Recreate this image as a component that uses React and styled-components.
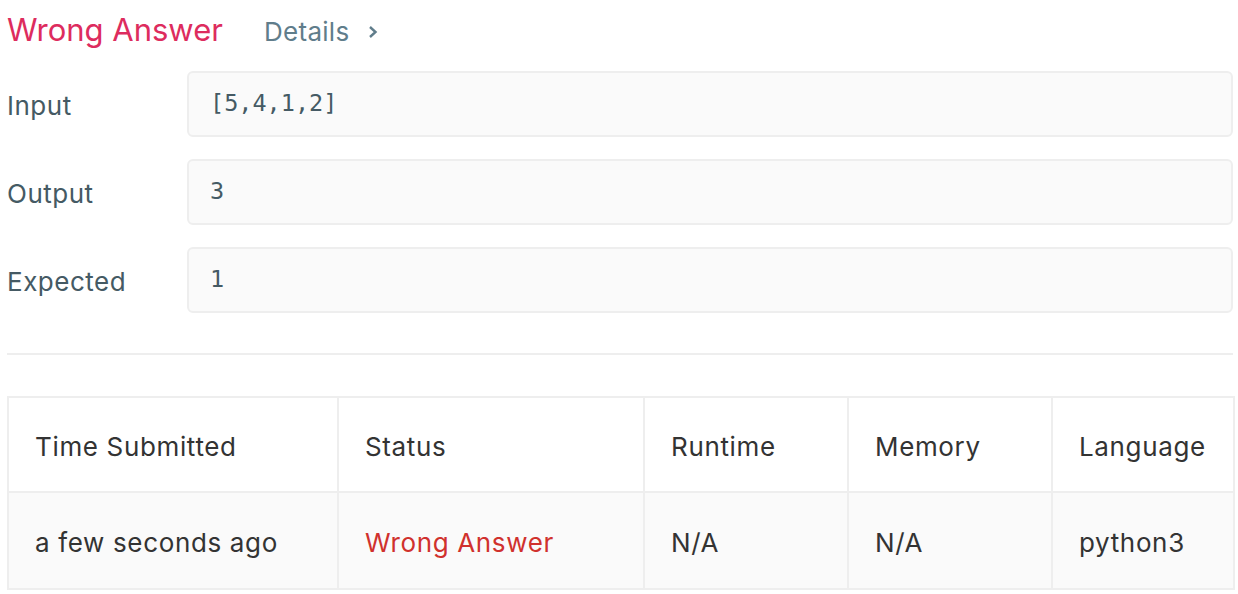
import React from "react";
import styled, { createGlobalStyle } from "styled-components";

const Global = createGlobalStyle`
  html, body { margin: 0; padding: 0; background: #fff; }
  body { font-family: Inter, "Liberation Sans", Arial, sans-serif; }
`;

const Page = styled.div`
  padding: 0 5px 0 7px;
  width: 1226px;
`;

const Header = styled.div`
  display: flex;
  align-items: baseline;
  height: 62px;
  gap: 41px;
`;

const Title = styled.h3`
  margin: 0;
  font-size: 31px;
  line-height: 60px;
  font-weight: 400;
  color: #dd2c5e;
  letter-spacing: 0;
`;

const DetailsLink = styled.a`
  display: flex;
  align-items: center;
  gap: 17px;
  font-size: 26px;
  color: #607d8b;
  text-decoration: none;
  letter-spacing: 0.3px;
`;

const Rows = styled.div`
  display: flex;
  flex-direction: column;
  gap: 22px;
  padding-top: 9px;
`;

const Row = styled.div`
  display: grid;
  grid-template-columns: 180px 1fr;
  align-items: center;
`;

const Label = styled.div`
  font-size: 26px;
  color: #455a64;
  letter-spacing: 0.5px;
  padding-top: 2px;
`;

const Box = styled.div`
  box-sizing: border-box;
  height: 66px;
  background: #fafafa;
  border: 2px solid #eeeeee;
  border-radius: 6px;
  padding: 0 21px;
  display: flex;
  align-items: center;
  font-family: "DejaVu Sans Mono", "Liberation Mono", monospace;
  font-size: 23.5px;
  color: #455a64;
  padding-bottom: 2px;
`;

const Divider = styled.hr`
  margin: 40px 0 0;
  border: none;
  border-top: 2px solid #eeeeee;
`;

const Table = styled.table`
  margin-top: 41px;
  width: 1226px;
  border-collapse: collapse;
  table-layout: fixed;
  border: 2px solid #eeeeee;
`;

const Th = styled.th`
  text-align: left;
  font-weight: 400;
  font-size: 26px;
  color: #333;
  height: 89px;
  padding: 4px 0 0 26px;
  border: 2px solid #eeeeee;
  letter-spacing: 0.65px;
`;

const BodyRow = styled.tr`
  background: #fafafa;
`;

const Td = styled.td`
  font-size: 26px;
  color: ${(p) => (p.$error ? "#d0312d" : "#333")};
  height: 91px;
  padding: 4px 0 0 26px;
  border: 2px solid #eeeeee;
  letter-spacing: 0.65px;
`;

const Chevron = () => (
  <svg width="12" height="16" viewBox="0 0 12 16" fill="none">
    <path d="M3 3 L8.5 8 L3 13" stroke="#607d8b" strokeWidth="2.4" />
  </svg>
);

const rows = [
  ["Input", "[5,4,1,2]"],
  ["Output", "3"],
  ["Expected", "1"],
];

const cols = [
  ["Time Submitted", 330],
  ["Status", 306],
  ["Runtime", 204],
  ["Memory", 204],
  ["Language", 182],
];

export default function App() {
  return (
    <Page>
      <Global />
      <Header>
        <Title>Wrong Answer</Title>
        <DetailsLink href="#">
          Details <Chevron />
        </DetailsLink>
      </Header>
      <Rows>
        {rows.map(([l, v]) => (
          <Row key={l}>
            <Label>{l}</Label>
            <Box>{v}</Box>
          </Row>
        ))}
      </Rows>
      <Divider />
      <Table>
        <colgroup>
          {cols.map(([c, w]) => (
            <col key={c} style={{ width: w }} />
          ))}
        </colgroup>
        <thead>
          <tr>
            {cols.map(([c]) => (
              <Th key={c}>{c}</Th>
            ))}
          </tr>
        </thead>
        <tbody>
          <BodyRow>
            <Td>a few seconds ago</Td>
            <Td $error>Wrong Answer</Td>
            <Td>N/A</Td>
            <Td>N/A</Td>
            <Td>python3</Td>
          </BodyRow>
        </tbody>
      </Table>
    </Page>
  );
}
